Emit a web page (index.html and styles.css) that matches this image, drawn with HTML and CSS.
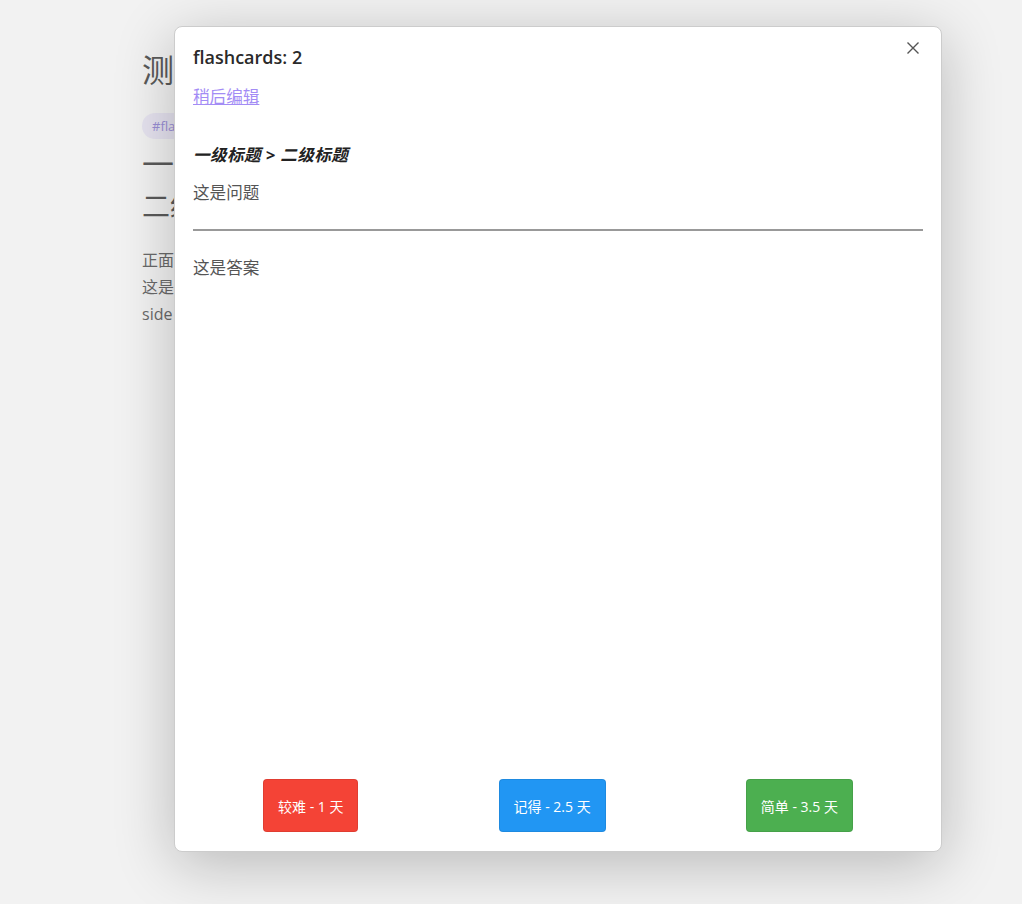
FILE: index.html
```html
<!DOCTYPE html>
<html lang="zh-CN">
<head>
    <meta charset="UTF-8">
    <meta name="viewport" content="width=device-width, initial-scale=1.0">
    <title>flashcards</title>
    <link rel="stylesheet" href="styles.css">
</head>
<body>
    <!-- Ghi chú phía sau -->
    <div class="note">
        <h1 class="note-title">测试卡片</h1>
        <span class="tag">#flashcards</span>
        <h1 class="note-h1">一级标题</h1>
        <h2 class="note-h2">二级标题</h2>
        <p class="note-text">正面内容<br>这是问题<br>side</p>
    </div>

    <!-- Hộp thoại ôn tập -->
    <div class="modal">
        <button class="modal-close" aria-label="close">
            <svg width="14" height="14" viewBox="0 0 14 14">
                <path d="M1.5 1.5 L12.5 12.5 M12.5 1.5 L1.5 12.5" stroke="#555" stroke-width="1.4" fill="none"/>
            </svg>
        </button>
        <div class="modal-title">flashcards: 2</div>
        <div class="modal-content">
            <a href="#" class="edit-later">稍后编辑</a>
            <div class="context">一级标题 &gt; 二级标题</div>
            <p class="question">这是问题</p>
            <hr class="divider">
            <p class="answer">这是答案</p>
        </div>
        <div class="response">
            <button class="btn btn-hard">较难 - 1 天</button>
            <button class="btn btn-good">记得 - 2.5 天</button>
            <button class="btn btn-easy">简单 - 3.5 天</button>
        </div>
    </div>
</body>
</html>
```

FILE: styles.css
```css
* {
    margin: 0;
    padding: 0;
    box-sizing: border-box;
}

body {
    font-family: "Open Sans", "Noto Sans CJK SC", sans-serif;
    background-color: #f2f2f2;
    color: #555;
    height: 904px;
    overflow: hidden;
}

.note {
    padding: 46px 0 0 142px;
    color: #5a5a5a;
}

.note-title {
    font-size: 32px;
    font-weight: 400;
    line-height: 48px;
    margin-bottom: 19px;
}

.tag {
    display: inline-block;
    background: #e6e3f0;
    color: #9a8fd6;
    font-size: 13px;
    line-height: 18px;
    padding: 4px 10px;
    border-radius: 13px;
}

.note-h1 {
    font-size: 32px;
    font-weight: 400;
    line-height: 42px;
    margin-top: 4px;
}

.note-h2 {
    font-size: 28px;
    font-weight: 400;
    line-height: 42px;
}

.note-text {
    margin-top: 20px;
    font-size: 16px;
    line-height: 27px;
    color: #6a6a6a;
}

.modal {
    position: absolute;
    left: 174px;
    top: 26px;
    width: 768px;
    height: 826px;
    background: #fff;
    border: 1px solid #ccc;
    border-radius: 8px;
    box-shadow: 0 12px 60px rgba(0, 0, 0, 0.24);
    padding: 16px 18px 19px 18px;
    display: flex;
    flex-direction: column;
}

.modal-close {
    position: absolute;
    top: 13px;
    right: 20px;
    width: 16px;
    height: 16px;
    border: none;
    background: none;
    display: flex;
    align-items: center;
    justify-content: center;
    cursor: pointer;
}

.modal-title {
    font-size: 18px;
    font-weight: 600;
    color: #2a2a2a;
    line-height: 28px;
}

.modal-content {
    flex: 1;
    font-size: 16.6px;
    line-height: 24px;
}

.edit-later {
    display: inline-block;
    margin-top: 14px;
    color: #a38cf5;
    text-decoration: underline;
}

.context {
    margin-top: 34px;
    font-weight: 700;
    font-style: italic;
    color: #222;
    letter-spacing: 0.4px;
}

.question {
    margin-top: 14px;
}

.divider {
    border: none;
    border-top: 2px solid #999;
    margin: 24px 0 25px;
}

.response {
    display: flex;
    justify-content: space-around;
}

.btn {
    height: 53px;
    padding: 0 14px;
    border-radius: 4px;
    border: 1px solid rgba(0, 0, 0, 0.08);
    color: #fff;
    font-family: "Open Sans", "Noto Sans CJK SC", sans-serif;
    font-size: 14px;
    cursor: pointer;
}

.btn-hard {
    background-color: #f44336;
}

.btn-good {
    background-color: #2196f3;
}

.btn-easy {
    background-color: #4caf50;
}
```
